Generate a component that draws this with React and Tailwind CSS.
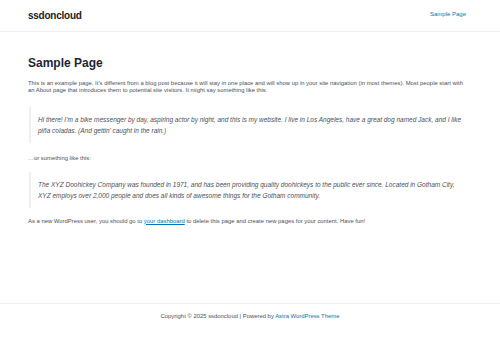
import React from "react";

export default function App() {
  return (
    <div className="min-h-[348px] bg-white flex flex-col text-[#4b4f58]" style={{ fontFamily: '"Liberation Sans", Arial, sans-serif' }}>
      <header className="h-[32px] border-b border-[#f0f0f0] px-[28px] flex items-center justify-between">
        <div className="text-[10px] font-bold text-[#222] tracking-tight">ssdoncloud</div>
        <a className="text-[6px] text-[#0274be] mr-[6px] -mt-[2px]">Sample Page</a>
      </header>

      <main className="px-[28px] pt-[25px] flex-1">
        <h1 className="text-[12px] font-bold text-[#1e2633] leading-none">Sample Page</h1>
        <p className="mt-[11px] text-[5.9px] leading-[6.5px] pr-[6px]">
          This is an example page. It’s different from a blog post because it will stay in one place and will show up in your site navigation (in most themes). Most people start with an About page that introduces them to potential site visitors. It might say something like this:
        </p>
        <blockquote className="mt-[14px] ml-[1px] border-l-[2px] border-[#f0f0f0] pl-[7px] py-[7px] italic text-[6.5px] leading-[11px]">
          Hi there! I’m a bike messenger by day, aspiring actor by night, and this is my website. I live in Los Angeles, have a great dog named Jack, and I like piña coladas. (And gettin’ caught in the rain.)
        </blockquote>
        <p className="mt-[12px] text-[5.9px] leading-[6.5px]">…or something like this:</p>
        <blockquote className="mt-[10px] ml-[1px] border-l-[2px] border-[#f0f0f0] pl-[7px] pr-[12px] py-[7px] italic text-[6.5px] leading-[11px]">
          The XYZ Doohickey Company was founded in 1971, and has been providing quality doohickeys to the public ever since. Located in Gotham City, XYZ employs over 2,000 people and does all kinds of awesome things for the Gotham community.
        </blockquote>
        <p className="mt-[10px] text-[5.9px] leading-[6.5px]">
          As a new WordPress user, you should go to <a className="text-[#0274be] underline">your dashboard</a> to delete this page and create new pages for your content. Have fun!
        </p>
      </main>

      <footer className="h-[45px] border-t border-[#f0f0f0] flex justify-center pt-[8px]">
        <div className="text-[5.9px]">
          Copyright © 2025 ssdoncloud | Powered by <a className="text-[#0274be]">Astra WordPress Theme</a>
        </div>
      </footer>
    </div>
  );
}
